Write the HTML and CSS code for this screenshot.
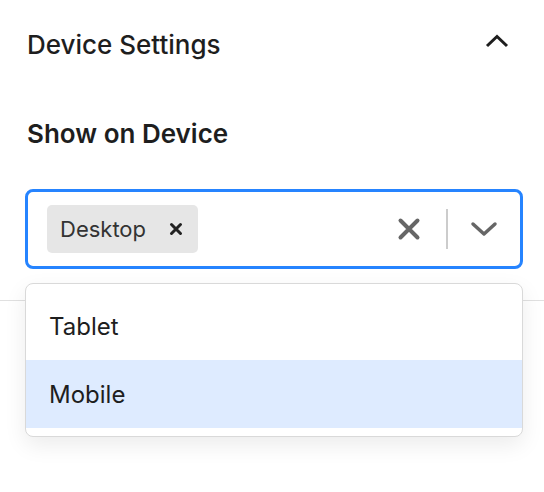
FILE: index.html
```html
<!DOCTYPE html>
<html lang="en">
<head>
<meta charset="UTF-8">
<meta name="viewport" content="width=device-width, initial-scale=1.0">
<title>Device Settings</title>
<link rel="stylesheet" href="styles.css">
</head>
<body>
  <div class="page">
    <div class="panel">
      <div class="panel-header">
        <h2 class="panel-title">Device Settings</h2>
        <svg class="toggle-icon" width="24" height="14" viewBox="0 0 24 14">
          <path d="M2 12 L12 2.5 L22 12" fill="none" stroke="#1e1e1e" stroke-width="3"/>
        </svg>
      </div>

      <div class="panel-body">
        <div class="field-label">Show on Device</div>

        <div class="select">
          <div class="select-control">
            <div class="select-values">
              <div class="tag">
                <span class="tag-label">Desktop</span>
                <svg class="tag-remove" width="14" height="14" viewBox="0 0 14 14">
                  <path d="M2.5 2.5 L11.5 11.5 M11.5 2.5 L2.5 11.5" stroke="#222" stroke-width="3" stroke-linecap="round"/>
                </svg>
              </div>
            </div>
            <div class="select-indicators">
              <svg class="clear-icon" width="24" height="24" viewBox="0 0 24 24">
                <path d="M3.5 3.5 L20.5 20.5 M20.5 3.5 L3.5 20.5" stroke="#666" stroke-width="4" stroke-linecap="round"/>
              </svg>
              <span class="separator"></span>
              <svg class="chevron-icon" width="28" height="16" viewBox="0 0 28 16">
                <path d="M3 3 L14 13 L25 3" fill="none" stroke="#666" stroke-width="3.5" stroke-linecap="round" stroke-linejoin="round"/>
              </svg>
            </div>
          </div>

          <div class="select-menu">
            <div class="option">Tablet</div>
            <div class="option focused">Mobile</div>
          </div>
        </div>
      </div>
    </div>
  </div>
</body>
</html>
```

FILE: styles.css
```css
body {
  font-family: Inter, "Noto Sans", sans-serif;
  margin: 0;
  padding: 0;
  background: #fff;
  color: #1e1e1e;
}

.page {
  min-height: 492px;
}

.panel {
  border-bottom: 1px solid #e0e0e0;
}

.panel-header {
  display: flex;
  justify-content: space-between;
  align-items: center;
  height: 88px;
  padding: 0 35px 0 27px;
}

.panel-title {
  margin: 0;
  font-size: 26px;
  font-weight: 500;
}

.toggle-icon {
  margin-top: -6px;
}

.panel-body {
  padding: 31px 21px 31px 25px;
}

.field-label {
  font-size: 26px;
  font-weight: 600;
  line-height: 30px;
  margin: 0 0 40px 2px;
}

.select {
  position: relative;
  z-index: 1;
}

.select-control {
  display: flex;
  align-items: center;
  height: 80px;
  box-sizing: border-box;
  border: 3px solid #2684ff;
  border-radius: 8px;
  padding: 0 0 0 19px;
}

.select-values {
  flex: 1;
  display: flex;
}

.tag {
  display: flex;
  align-items: center;
  height: 48px;
  padding: 0 15px 0 13px;
  background: #e6e6e6;
  border-radius: 5px;
}

.tag-label {
  font-size: 22px;
  color: #333;
  margin-right: 23px;
}

.select-indicators {
  display: flex;
  align-items: center;
  height: 100%;
}

.clear-icon {
  margin-right: 25px;
}

.separator {
  width: 2px;
  height: 40px;
  background: #ccc;
}

.chevron-icon {
  margin: 0 22px 0 22px;
}

.select-menu {
  position: absolute;
  top: calc(100% + 14px);
  left: 0;
  right: 0;
  background: #fff;
  border: 1px solid #d9d9d9;
  border-radius: 8px;
  box-shadow: 0 8px 22px rgba(0, 0, 0, 0.08);
  padding: 8px 0;
}

.option {
  height: 68px;
  display: flex;
  align-items: center;
  padding-left: 23px;
  font-size: 24px;
  color: #1e1e1e;
}

.option.focused {
  background: #deebff;
}
```
